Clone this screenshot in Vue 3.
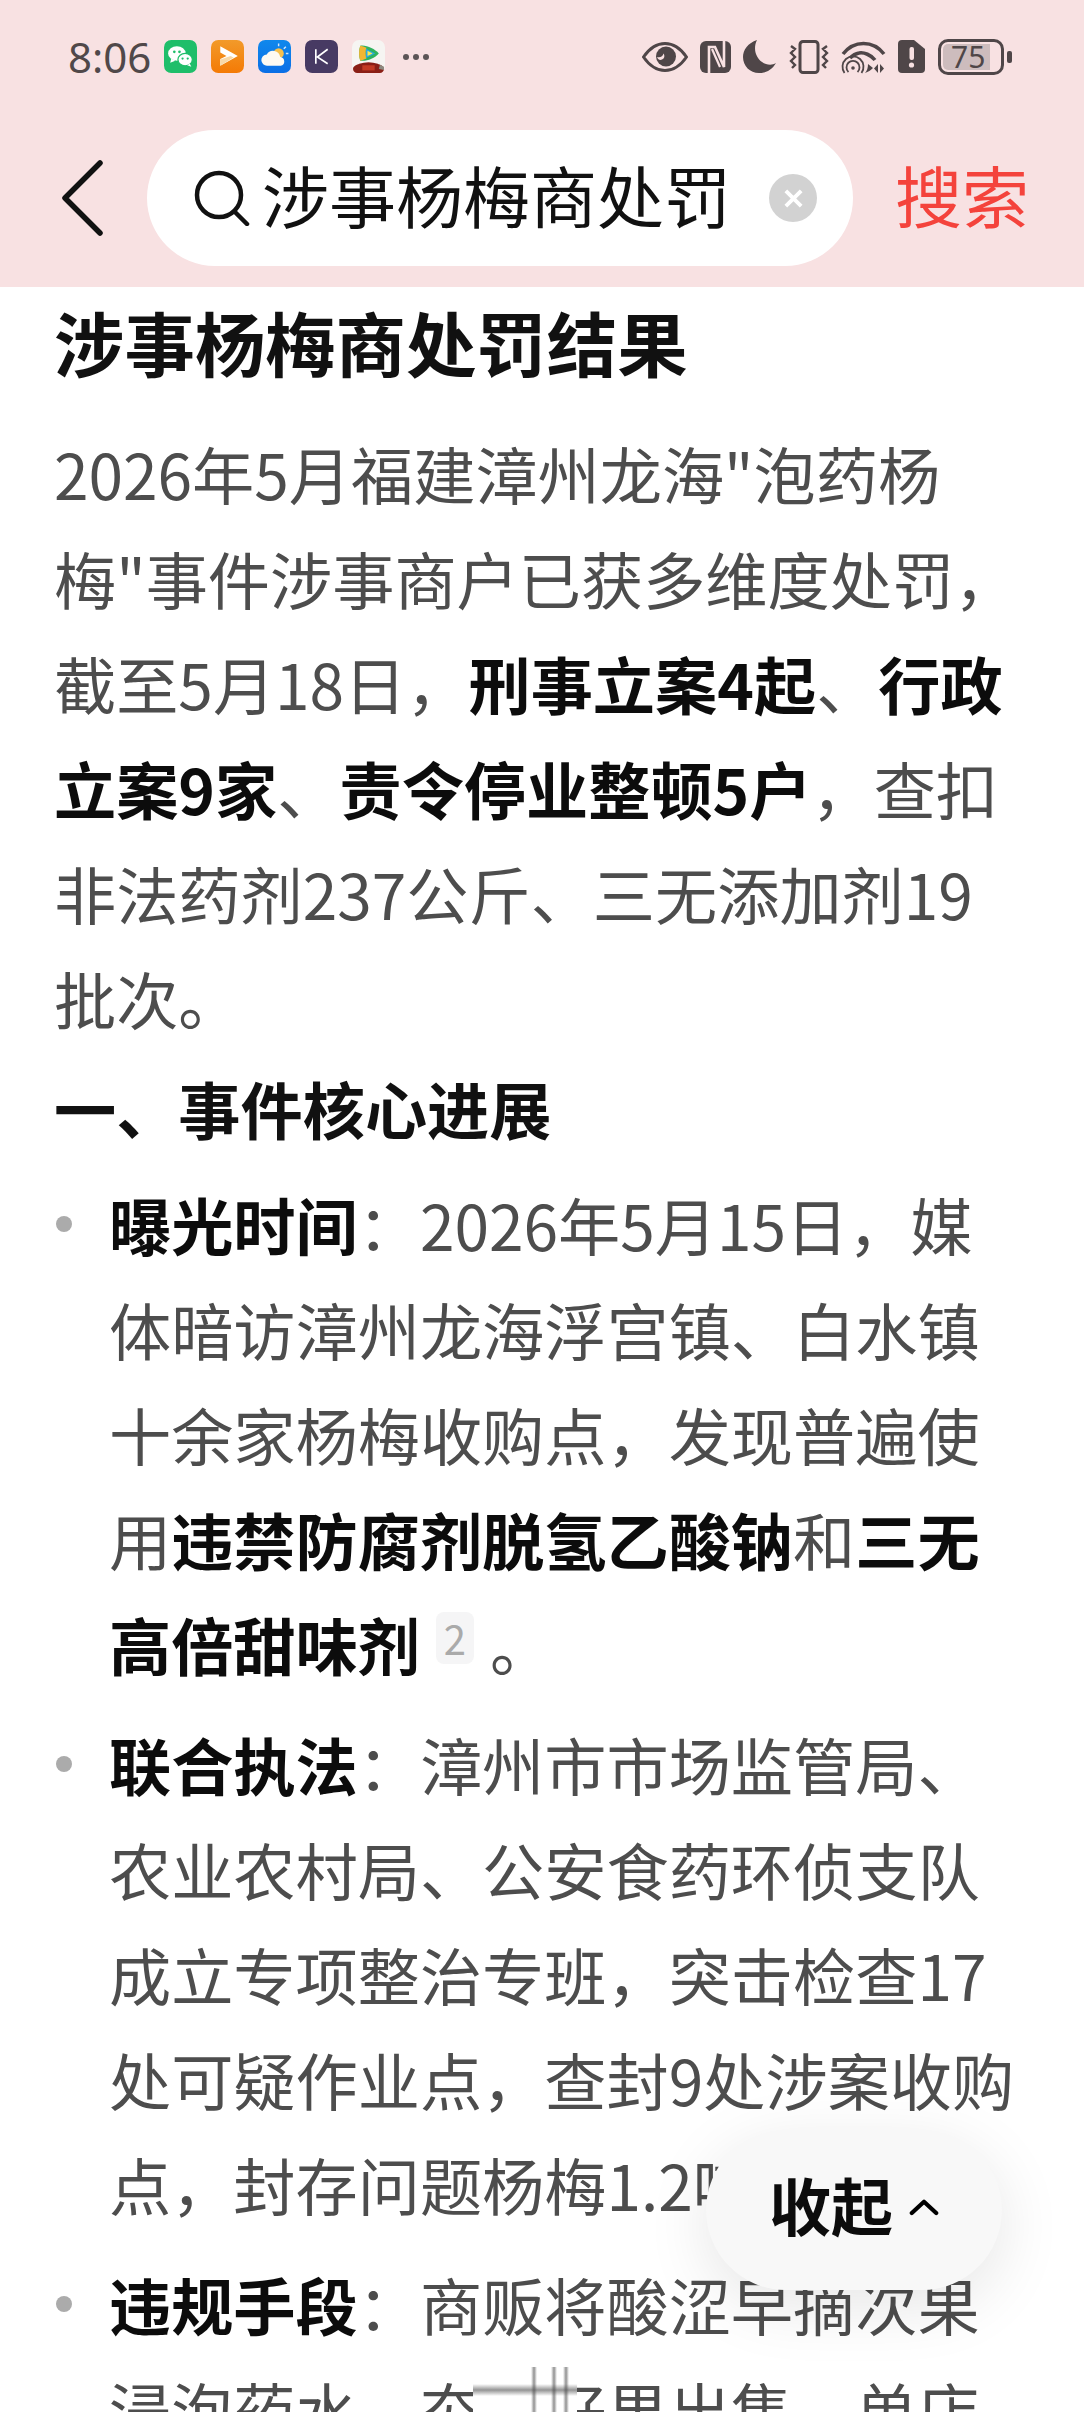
<script setup>
</script>

<template>
  <div class="screen">
    <header class="top">
      <div class="status">
        <span class="time">8:06</span>
        <div class="apps">
          <svg class="app" viewBox="0 0 32 32"><rect width="32" height="32" rx="7" fill="#1fbe6a"/><ellipse cx="12.500" cy="13" rx="8.500" ry="7" fill="#fff"/><path d="M7 18l-1 4 5-2z" fill="#fff"/><ellipse cx="20.500" cy="19" rx="7" ry="6" fill="#fff" stroke="#1fbe6a" stroke-width="1.200"/><path d="M25 23l1.500 3-4-1.500z" fill="#fff"/><circle cx="10" cy="11.500" r="1.300" fill="#1fbe6a"/><circle cx="15" cy="11.500" r="1.300" fill="#1fbe6a"/><circle cx="18" cy="18" r="1.100" fill="#1fbe6a"/><circle cx="23" cy="18" r="1.100" fill="#1fbe6a"/></svg>
          <svg class="app" viewBox="0 0 32 32"><defs><linearGradient id="og" x1="0" y1="0" x2="0" y2="1"><stop offset="0" stop-color="#f29a2a"/><stop offset="1" stop-color="#f47a05"/></linearGradient></defs><rect width="32" height="32" rx="7" fill="url(#og)"/><path d="M9 6l17 9.500L9 25v-6.500l6-3-6-3.500z" fill="#fff"/><path d="M9 25l13-8-3-1.500L9 19z" fill="#f8d9a8"/></svg>
          <svg class="app" viewBox="0 0 32 32"><defs><linearGradient id="bg" x1="0" y1="0" x2="0" y2="1"><stop offset="0" stop-color="#1088ec"/><stop offset="1" stop-color="#0b6fe6"/></linearGradient></defs><rect width="32" height="32" rx="7" fill="url(#bg)"/><circle cx="20" cy="13" r="5" fill="#f6c04d"/><path d="M20 3.500v2.500M27 6.500l-2 2M29.500 13h-2.500" stroke="#cfe6fb" stroke-width="1.400" fill="none"/><path d="M9 25a5.500 5.500 0 0 1-.5-11 7 7 0 0 1 13 2.500 4.300 4.300 0 0 1 .5 8.500z" fill="#fdfaf2"/></svg>
          <svg class="app" viewBox="0 0 32 32"><rect width="32" height="32" rx="7" fill="#473a63"/><path d="M10.500 9v14M22 9l-10 7.500L22 23" fill="none" stroke="#fff" stroke-width="1.600"/></svg>
          <svg class="app" viewBox="0 0 32 32"><rect width="32" height="32" rx="7" fill="#f6f5f2"/><path d="M8 5.500c6-1 14 3 18 7.500-4 4.500-12 8-18 7-1.500-4-1.500-10.500 0-14.500z" fill="#2fb35f"/><path d="M8 5.500c-1.500 4-1.500 10.500 0 14.500 2-.3 4-1 6-2-1-3-1-8 0-10.500-2-1-4-1.700-6-2z" fill="#f2b632"/><path d="M13.500 8.500L22.500 13l-9 4.500z" fill="#29a8e8"/><path d="M15 10.500L20 13l-5 2.500z" fill="#fbe94c"/><path d="M1 28c0-3 4-4 6-5 6-2 12-2 18 0 2 1 6 2 6 5v0a4 4 0 0 1-4 4H5a4 4 0 0 1-4-4z" fill="#8a1f16"/><rect x="10" y="24.500" width="12" height="5" fill="#c23a24"/><path d="M27 24l4 2v3l-5-1z" fill="#8d8a80"/></svg>
        </div>
        <span class="more"><i></i><i></i><i></i></span>
        <div class="sys">
          <svg class="i-eye" viewBox="0 0 46 30"><path d="M1.500 15C8 5.500 15 1.500 23 1.500S38 5.500 44.500 15C38 24.500 31 28.500 23 28.500S8 24.500 1.500 15z" fill="none" stroke="#4f4648" stroke-width="3"/><circle cx="24" cy="14.500" r="10" fill="#4f4648"/><path d="M15 15c3 1 6-.5 6.500-3.500 1.500 2 1 5-1.500 6-2 1-4 0-5-2.500z" fill="#f8e1e2"/></svg>
          <svg class="i-nfc" viewBox="0 0 31 32"><rect width="31" height="32" rx="6" fill="#4f4648"/><path d="M9 32V6h6l9 20V0" fill="none" stroke="#f8e1e2" stroke-width="2.600"/><path d="M12 8l8 18" fill="none" stroke="#f8e1e2" stroke-width="2.200"/></svg>
          <svg class="i-moon" viewBox="0 0 33 33"><path d="M14 0C5 3 0 10 0 17c0 9 7 16 16 16 7 0 13-3 17-10-3 2-7 2-10 1C14 21 9 10 14 0z" fill="#4f4648"/></svg>
          <svg class="i-vib" viewBox="0 0 42 34"><rect x="12" y="1.500" width="18" height="31" rx="3" fill="none" stroke="#4f4648" stroke-width="3"/><path d="M3 6l4 3-4 4 4 4-4 4 4 4-3 3M39 6l-4 3 4 4-4 4 4 4-4 4 3 3" fill="none" stroke="#4f4648" stroke-width="2.400"/></svg>
          <svg class="i-wifi" viewBox="0 0 45 34"><path d="M2 14C13 0 32 0 43 14" fill="none" stroke="#4f4648" stroke-width="3.600"/><path d="M9 18c3-3 6-4.500 9-5 5-1 12 2 16 7" fill="none" stroke="#4f4648" stroke-width="3.600"/><circle cx="12" cy="28" r="1.800" fill="#4f4648"/><path d="M7.500 32a6.500 6.500 0 1 1 9 0" fill="none" stroke="#4f4648" stroke-width="1.800"/><path d="M3.500 33a10.500 10.500 0 1 1 17 0" fill="none" stroke="#4f4648" stroke-width="1.800"/><path d="M24 33c2-2 3-5 3-9l5 4c-2 2-5 4-8 5zM37 24v9l-4-4.500zM39 24v9l4-4.500z" fill="#4f4648"/></svg>
          <svg class="i-sim" viewBox="0 0 27 33"><path d="M4 0h12l11 9v20a4 4 0 0 1-4 4H4a4 4 0 0 1-4-4V4a4 4 0 0 1 4-4z" fill="#4f4648"/><rect x="11.500" y="7" width="4.500" height="13" rx="2" fill="#f8e1e2"/><circle cx="13.500" cy="25" r="2.600" fill="#f8e1e2"/></svg>
          <div class="battery">
            <span class="cell"><span class="level"></span></span>
            <span class="num">75</span>
            <span class="tip"></span>
          </div>
        </div>
      </div>
      <div class="searchrow">
        <svg class="back" viewBox="0 0 44 76"><path d="M40 3L5 38l35 35" fill="none" stroke="#111" stroke-width="5.500" stroke-linecap="round" stroke-linejoin="round"/></svg>
        <div class="pill">
          <svg class="lens" viewBox="0 0 56 56"><circle cx="25" cy="25" r="22" fill="none" stroke="#111" stroke-width="4.500"/><path d="M41 42l12 12" fill="none" stroke="#111" stroke-width="4.500" stroke-linecap="round"/></svg>
          <span class="query">涉事杨梅商处罚</span>
          <span class="clear">
            <svg viewBox="0 0 24 24"><path d="M4 4l16 16M20 4L4 20" stroke="#fff" stroke-width="4"/></svg>
          </span>
        </div>
        <span class="go">搜索</span>
      </div>
    </header>

    <main class="body">
      <h1 class="title">涉事杨梅商处罚结果</h1>
      <p class="para">2026年5月福建漳州龙海"泡药杨<br>梅"事件涉事商户已获多维度处罚，<br>截至5月18日，<b>刑事立案4起</b>、<b>行政<br>立案9家</b>、<b>责令停业整顿5户</b>，查扣<br>非法药剂237公斤、三无添加剂19<br>批次。</p>
      <h2 class="sub">一、事件核心进展</h2>
      <ul class="list">
        <li><b>曝光时间</b>：2026年5月15日，媒<br>体暗访漳州龙海浮宫镇、白水镇<br>十余家杨梅收购点，发现普遍使<br>用<b>违禁防腐剂脱氢乙酸钠</b>和<b>三无<br>高倍甜味剂</b><span class="cite">2</span>。</li>
        <li><b>联合执法</b>：漳州市市场监管局、<br>农业农村局、公安食药环侦支队<br>成立专项整治专班，突击检查17<br>处可疑作业点，查封9处涉案收购<br>点，封存问题杨梅1.2吨。</li>
        <li><b>违规手段</b>：商贩将酸涩早摘次果<br>浸泡药水，夯<span class="gap"></span>好果出售，单店</li>
      </ul>
    </main>

    <div class="smear">
      <span class="band"></span>
      <span class="bar b1"></span>
      <span class="bar b2"></span>
      <span class="bar b3"></span>
    </div>

    <button class="collapse">收起<svg viewBox="0 0 32 20"><path d="M3 17L16 5l13 12" fill="none" stroke="#000" stroke-width="4.500" stroke-linecap="round" stroke-linejoin="round"/></svg></button>
  </div>
</template>

<style scoped>
.screen { position: relative; width: 1084px; height: 2412px; overflow: hidden; background: #fff; font-family: "Noto Sans CJK SC", "Noto Sans", sans-serif; color: #4d4d4d; }
.top { height: 287px; background: #f8e1e2; box-sizing: border-box; padding: 40px 0 0; }
.status { display: flex; align-items: center; height: 33px; padding-left: 68px; padding-right: 80px; }
.time { font-family: "Noto Sans", sans-serif; font-size: 42px; color: #504849; width: 96px; line-height: 33px; flex: none; }
.apps { display: flex; gap: 14px; }
.app { width: 33px; height: 33px; display: block; }
.more { display: flex; gap: 4px; margin-left: 18px; }
.more i { width: 6px; height: 6px; border-radius: 50%; background: #5c5456; }
.sys { margin-left: auto; display: flex; align-items: center; }
.sys svg { display: block; flex: none; }
.i-eye { width: 46px; height: 30px; margin-right: 12px; }
.i-nfc { width: 31px; height: 32px; margin-right: 12px; }
.i-moon { width: 33px; height: 33px; margin-right: 12px; }
.i-vib { width: 42px; height: 34px; margin-right: 11px; }
.i-wifi { width: 45px; height: 34px; margin-right: 12px; }
.i-sim { width: 27px; height: 33px; margin-right: 13px; }
.battery { position: relative; width: 66px; height: 36px; }
.cell { display: flex; width: 66px; height: 36px; border: 3px solid #4f4648; border-radius: 10px; box-sizing: border-box; overflow: hidden; }
.level { width: 47px; background: #cdbcbd; margin: 2px 0 2px 2px; border-radius: 5px 0 0 5px; }
.num { position: absolute; left: 13px; top: 3px; font-family: "Noto Sans", sans-serif; font-size: 30px; line-height: 30px; color: #4f4648; }
.tip { position: absolute; left: 69px; top: 12px; width: 5px; height: 12px; background: #4f4648; border-radius: 2px; }
.searchrow { display: flex; align-items: center; margin-top: 57px; height: 136px; }
.back { width: 44px; height: 76px; margin-left: 60px; flex: none; }
.pill { margin-left: 43px; width: 706px; height: 136px; border-radius: 68px; background: #fff; display: flex; align-items: center; box-sizing: border-box; padding-left: 47px; flex: none; }
.lens { width: 56px; height: 56px; flex: none; }
.query { font-size: 67px; line-height: 80px; color: #111; margin-left: 12px; width: 467px; white-space: nowrap; padding-bottom: 8px; }
.clear { width: 48px; height: 48px; border-radius: 50%; background: #d2d2d2; display: flex; align-items: center; justify-content: center; margin-left: 40px; flex: none; }
.clear svg { width: 23px; height: 23px; }
.go { margin-left: 42px; font-size: 67px; line-height: 80px; color: #f4433c; white-space: nowrap; padding-bottom: 8px; }
.body { padding: 0 0 0 54px; white-space: nowrap; }
.title { margin: 4px 0 30px; font-size: 70.400px; font-weight: 700; line-height: 100px; color: #111; }
.para { margin: 0; font-size: 62.200px; line-height: 105px; }
b { font-weight: 700; color: #0c0c0c; }
.sub { margin: 5px 0 0; font-size: 62.200px; font-weight: 700; line-height: 105px; color: #111; }
.list { list-style: none; margin: 11px 0 0; padding: 0 0 0 55px; }
.list li { position: relative; font-size: 62.200px; line-height: 105px; margin-bottom: 15px; }
.list li::before { content: ""; position: absolute; left: -53px; top: 44px; width: 16px; height: 16px; border-radius: 50%; background: #ababab; }
.cite { display: inline-flex; align-items: center; justify-content: center; vertical-align: 16px; width: 38px; height: 52px; margin: 0 16px; border-radius: 8px; background: #f5f5f6; color: #aaa; font-size: 40px; line-height: 52px; }
.gap { display: inline-block; width: 1em; }
.smear { position: absolute; left: 473px; top: 2367px; width: 104px; height: 45px; background: #fff; }
.band { position: absolute; left: 0; right: 0; top: 17px; height: 12px; background: linear-gradient(180deg, rgba(90,90,90,0), rgba(90,90,90,.65) 50%, rgba(90,90,90,0)); }
.bar { position: absolute; top: 0; bottom: 0; width: 6px; background: linear-gradient(90deg, rgba(70,70,70,0), rgba(70,70,70,.6) 50%, rgba(70,70,70,0)); }
.b1 { left: 58px; }
.b2 { left: 78px; }
.b3 { left: 90px; }
.collapse { position: absolute; left: 706px; top: 2130px; width: 296px; height: 160px; border: 0; border-radius: 80px; padding: 0 0 12px; background: #f8f8f8; box-shadow: 0 16px 64px rgba(0,0,0,.1); display: flex; align-items: center; justify-content: center; gap: 16px; font-family: inherit; font-size: 62px; font-weight: 700; color: #0c0c0c; }
.collapse svg { width: 30px; height: 19px; margin-top: 4px; }
</style>
